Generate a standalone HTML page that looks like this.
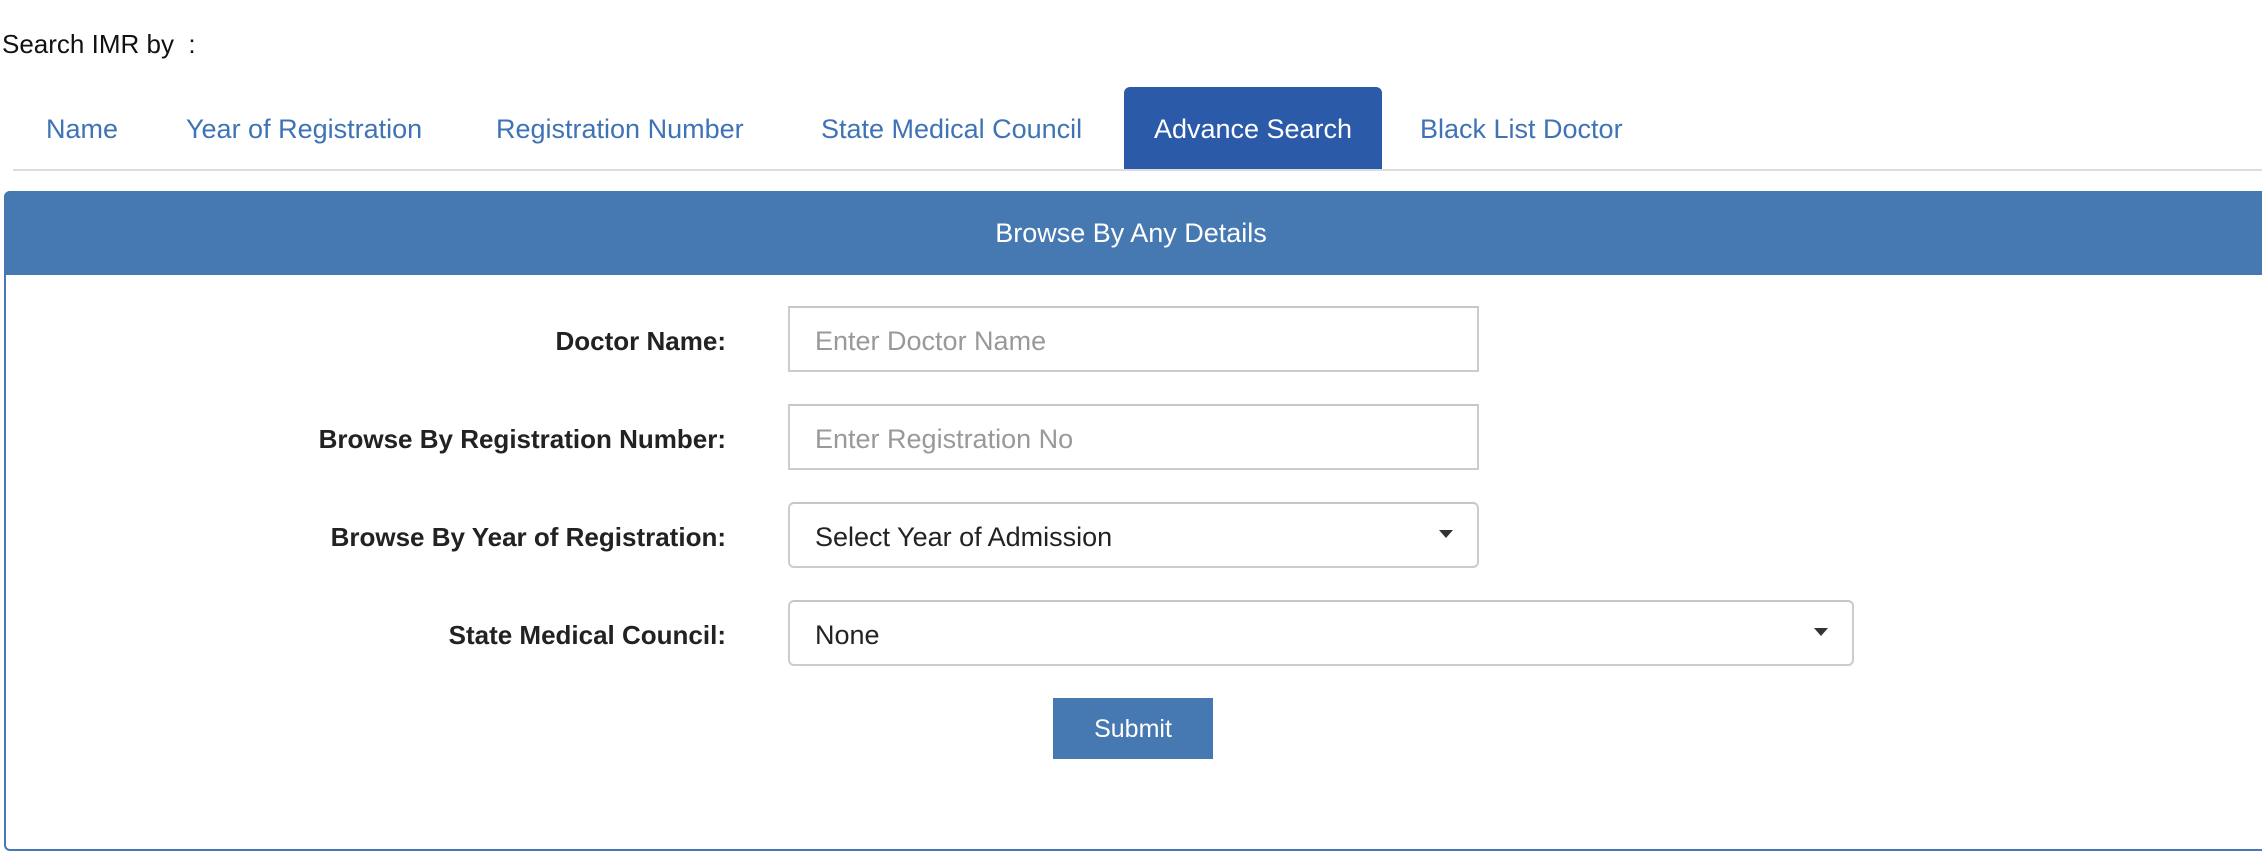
<!DOCTYPE html>
<html><head><style>
*{box-sizing:border-box;margin:0;padding:0}
body{width:2262px;height:838px;background:#fff;font-family:"Liberation Sans",sans-serif;position:relative;overflow:hidden;color:#222}
.a{position:absolute;white-space:nowrap}
.tab{position:absolute;top:114px;font-size:27px;color:#3e73b6}
.lbl{position:absolute;right:1536px;font-size:26px;font-weight:bold;color:#222}
.inp{position:absolute;left:788px;width:691px;height:66px;border:2px solid #ccc;border-top-color:#c6c6c6;font-size:27px;padding-left:25px;line-height:66px}
.sel{border-radius:6px;color:#222}
.arr{position:absolute;right:24px;top:26px;width:0;height:0;border-left:7px solid transparent;border-right:7px solid transparent;border-top:8px solid #333}
</style></head><body>
<div class="a" style="left:2px;top:29px;font-size:26px;color:#111">Search IMR by &nbsp;:</div>
<div class="tab" style="left:46px">Name</div>
<div class="tab" style="left:186px">Year of Registration</div>
<div class="tab" style="left:496px">Registration Number</div>
<div class="tab" style="left:821px">State Medical Council</div>
<div class="a" style="left:1124px;top:87px;width:258px;height:84px;background:#2a5aa8;border-radius:6px 6px 0 0"></div>
<div class="tab" style="left:1124px;width:258px;text-align:center;color:#fff">Advance Search</div>
<div class="tab" style="left:1420px">Black List Doctor</div>
<div class="a" style="left:13px;top:169px;width:2249px;height:2px;background:#ddd"></div>
<div class="a" style="left:4px;top:191px;width:2270px;height:660px;border:2px solid #4679b2;border-radius:6px"></div>
<div class="a" style="left:4px;top:191px;width:2270px;height:84px;background:#4679b2;border-radius:6px 6px 0 0"></div>
<div class="a" style="left:4px;top:218px;width:2254px;text-align:center;color:#fff;font-size:27px">Browse By Any Details</div>
<div class="lbl" style="top:326px">Doctor Name:</div>
<div class="inp" style="top:306px;color:#999">Enter Doctor Name</div>
<div class="lbl" style="top:424px">Browse By Registration Number:</div>
<div class="inp" style="top:404px;color:#999">Enter Registration No</div>
<div class="lbl" style="top:522px">Browse By Year of Registration:</div>
<div class="inp sel" style="top:502px">Select Year of Admission<div class="arr"></div></div>
<div class="lbl" style="top:620px">State Medical Council:</div>
<div class="inp sel" style="top:600px;width:1066px">None<div class="arr"></div></div>
<div class="a" style="left:1053px;top:698px;width:160px;height:61px;background:#4679b2;color:#fff;font-size:25px;text-align:center;line-height:63px">Submit</div>
</body></html>
